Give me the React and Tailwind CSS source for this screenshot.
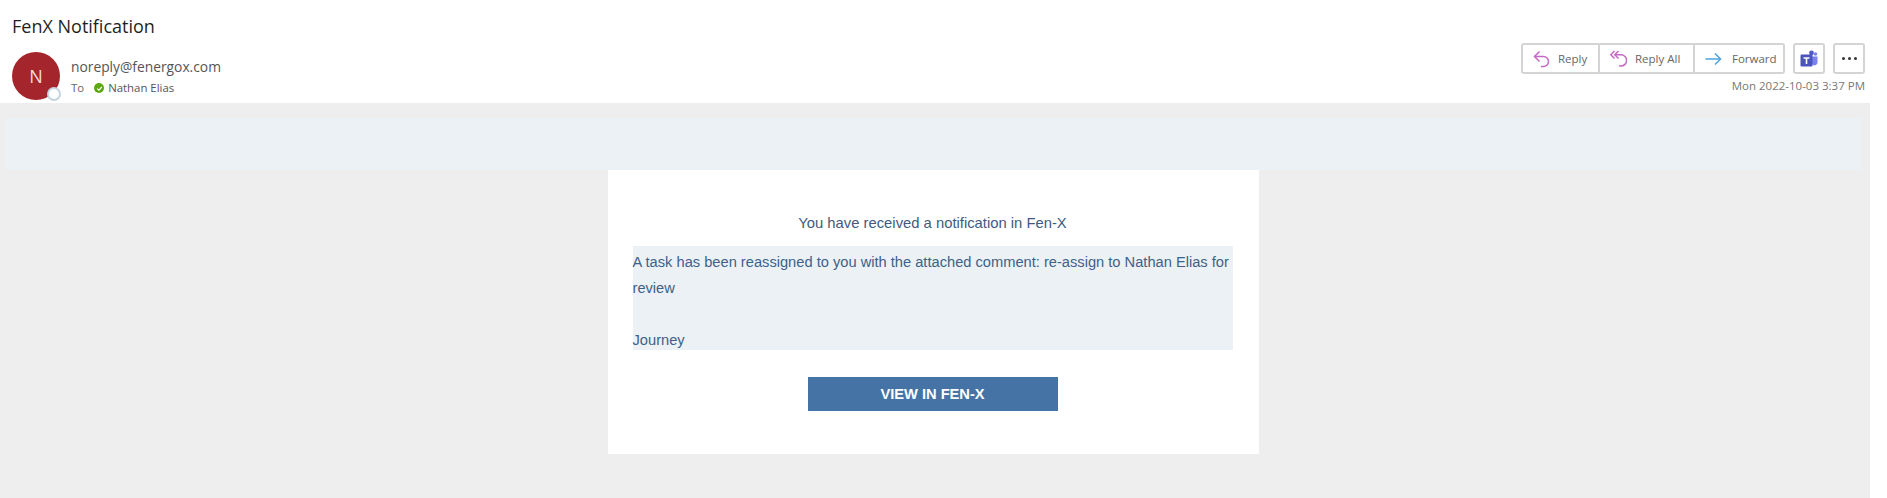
const font = "font-['Open_Sans','Noto_Sans',sans-serif]"

function ReplyIcon() {
  return (
    <svg width="17" height="18" viewBox="0 0 17 18" fill="none" stroke="#c768c4" strokeWidth="1.5">
      <path d="M6.5 1.5 1.5 6.5 6.5 11.5" />
      <path d="M1.5 6.5H10.5a5 5 0 0 1 0 10H8" />
    </svg>
  )
}

function ReplyAllIcon() {
  return (
    <svg width="17" height="18" viewBox="0 0 17 18" fill="none" stroke="#c768c4" strokeWidth="1.5">
      <path d="M4.5 1 .8 4.8 4.5 8.5" />
      <path d="M8.5 1 4.8 4.8 8.5 8.5" />
      <path d="M4.8 4.8H11a5.5 5.5 0 0 1 0 11.2H9" />
    </svg>
  )
}

function ForwardIcon() {
  return (
    <svg width="17" height="14" viewBox="0 0 17 14" fill="none" stroke="#4aa3df" strokeWidth="1.5">
      <path d="M10 1.5 15.5 7 10 12.5" />
      <path d="M0.5 7H15.5" />
    </svg>
  )
}

function TeamsIcon() {
  return (
    <svg width="18" height="18" viewBox="0 0 18 18">
      <circle cx="11.5" cy="3" r="2.4" fill="#5059c9" />
      <circle cx="15.5" cy="4" r="1.8" fill="#7b83eb" />
      <path d="M12 6.5h5.5v6a3 3 0 0 1-5.5 1.6z" fill="#7b83eb" />
      <rect x="0.5" y="4.5" width="12" height="12" rx="1.2" fill="#4b53bc" />
      <path d="M3.5 7.2h6v1.5H7.3v5.3H5.7V8.7H3.5z" fill="#fff" />
    </svg>
  )
}

export default function App() {
  return (
    <div className={`h-[498px] bg-white overflow-hidden flex flex-col ${font}`}>
      {/* Message header */}
      <header className="h-[103px] shrink-0 flex justify-between">
        <div className="pl-3">
          <h1 className="pt-[14px] text-lg leading-6 text-[#1f1f1f]">FenX Notification</h1>
          <div className="mt-[14px] flex">
            <div className="relative size-12 rounded-full bg-[#a4262c] flex items-center justify-center text-lg text-[#f3dcdc]">
              N
              <span className="absolute right-[-1px] bottom-[-1px] size-[14px] rounded-full bg-white border-2 border-[#c5d5e0]" />
            </div>
            <div className="ml-[11px]">
              <div className="mt-[5px] text-[13.8px] leading-5 text-[#555]">noreply@fenergox.com</div>
              <div className="mt-[2px] flex items-center text-[11.4px] leading-[18px] text-[#666]">
                <span>To</span>
                <span className="ml-[10px] mr-[4px] size-[10px] rounded-full bg-[#5ca80f] flex items-center justify-center">
                  <svg width="7" height="7" viewBox="0 0 7 7" fill="none" stroke="#fff" strokeWidth="1.2">
                    <path d="M1.2 3.6 2.9 5.2 5.8 2" />
                  </svg>
                </span>
                <span className="text-[#555]">Nathan Elias</span>
              </div>
            </div>
          </div>
        </div>

        <div className="pt-[43px] pr-[22px] flex flex-col items-end">
          <div className="flex">
            <div className="h-[31px] flex rounded-[3px] border-2 border-[#d6d4d2] text-[11.5px] text-[#666]">
              <button className="w-[77px] flex items-center gap-2 pl-[10px] border-r-2 border-[#d6d4d2]"><ReplyIcon />Reply</button>
              <button className="w-[95px] flex items-center gap-2 pl-[10px] border-r-2 border-[#d6d4d2]"><ReplyAllIcon />Reply All</button>
              <button className="flex-1 w-[88px] flex items-center gap-[10px] pl-[10px]"><ForwardIcon />Forward</button>
            </div>
            <button className="ml-2 w-8 h-[31px] flex items-center justify-center rounded-[3px] border-2 border-[#d6d4d2]"><TeamsIcon /></button>
            <button className="ml-2 w-8 h-[31px] flex items-center justify-center gap-[3px] rounded-[3px] border-2 border-[#d6d4d2]">
              <span className="size-[3px] rounded-full bg-[#333]" />
              <span className="size-[3px] rounded-full bg-[#333]" />
              <span className="size-[3px] rounded-full bg-[#333]" />
            </button>
          </div>
          <div className="mt-1 text-[11.5px] leading-[16px] text-[#777]">Mon 2022-10-03 3:37 PM</div>
        </div>
      </header>

      {/* Message body */}
      <main className="flex-1 mr-[17px] bg-[#eeeeee] pl-[5px] pr-[9px] pt-[15px]">
        <div className="h-[52px] bg-[#ecf1f5]" />
        <div className="mx-auto w-[651px] h-[284px] bg-white pl-[25px] pr-[26px] pt-[43px] font-['Liberation_Sans',sans-serif] text-[#3d6289] text-[14.67px]">
          <p className="text-center text-[14.8px] leading-5 text-[#3f5b7d]">You have received a notification in Fen-X</p>
          <div className="mt-[13px] h-[104px] bg-[#ecf1f5] pt-[3px] leading-[26px]">
            A task has been reassigned to you with the attached comment: re-assign to Nathan Elias for review
            <br />
            <br />
            Journey
          </div>
          <a className="ml-[175px] mt-[27px] block w-[250px] h-[34px] bg-[#4673a5] text-center font-bold leading-[34px] text-white">VIEW IN FEN-X</a>
        </div>
      </main>
    </div>
  )
}
